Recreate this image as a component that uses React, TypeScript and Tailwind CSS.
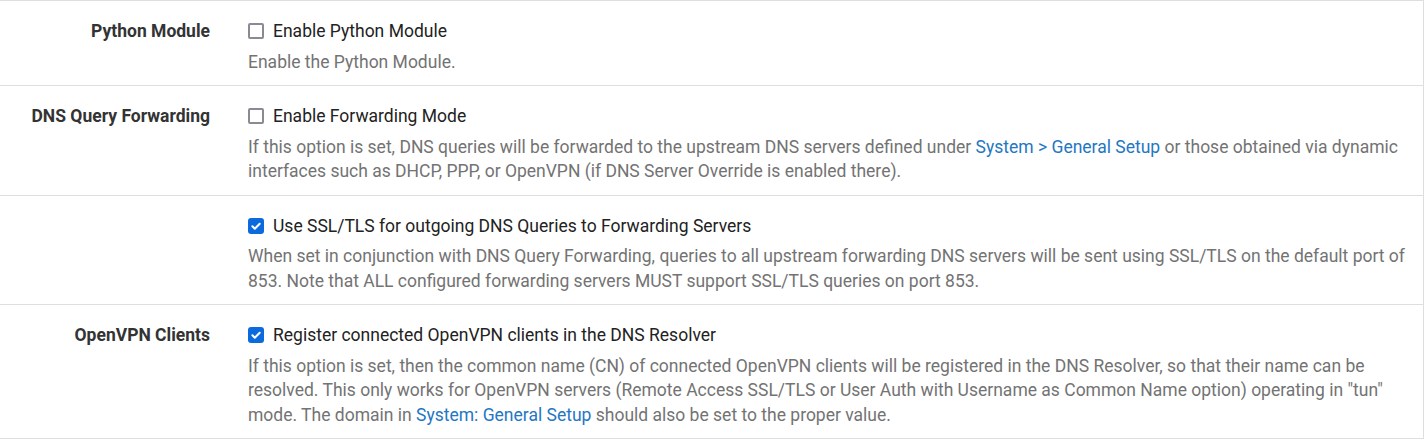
import type { FC, ReactNode } from 'react';

type CheckProps = {
  checked?: boolean;
};

const Check: FC<CheckProps> = ({ checked }) => {
  if (checked) {
    return (
      <span className="mr-[9px] inline-flex h-[16px] w-[16px] shrink-0 items-center justify-center rounded-[3px] bg-[#0b6bdd]">
        <svg viewBox="0 0 12 12" width="12" height="12" fill="none">
          <path d="M2.4 6.3l2.4 2.4 4.9-5" stroke="#fff" strokeWidth="2" strokeLinecap="round" strokeLinejoin="round" />
        </svg>
      </span>
    );
  }
  return <span className="mr-[9px] inline-block h-[16px] w-[16px] shrink-0 rounded-[2px] border-2 border-[#8a8a95] bg-white" />;
};

type RowProps = {
  label?: string;
  checkLabel: string;
  checked?: boolean;
  children: ReactNode;
};

const Row: FC<RowProps> = ({ label, checkLabel, checked, children }) => {
  return (
    <div className="flex border-b border-[#dedede] pt-[18px] pb-[11px]">
      <div className="w-[210px] shrink-0 text-right font-bold text-[#333]">{label}</div>
      <div className="ml-[38px] flex-1 pr-[12px]">
        <label className="flex items-center text-[#222]">
          <Check checked={checked} />
          {checkLabel}
        </label>
        <div className="mt-[6px] text-[#737373]">{children}</div>
      </div>
    </div>
  );
};

const Link: FC<{ children: ReactNode }> = ({ children }) => (
  <a className="text-[#2477c2]" href="#">
    {children}
  </a>
);

export default function App() {
  return (
    <div className="min-h-screen bg-white font-['Roboto',sans-serif] text-[17.5px] leading-[24.5px]">
      <div className="w-[1424px] border-t border-r border-[#dedede] bg-white">
        <Row label="Python Module" checkLabel="Enable Python Module">
          Enable the Python Module.
        </Row>
        <Row label="DNS Query Forwarding" checkLabel="Enable Forwarding Mode">
          If this option is set, DNS queries will be forwarded to the upstream DNS servers defined under{' '}
          <Link>System &gt; General Setup</Link> or those obtained via dynamic interfaces such as DHCP, PPP, or
          OpenVPN (if DNS Server Override is enabled there).
        </Row>
        <Row checkLabel="Use SSL/TLS for outgoing DNS Queries to Forwarding Servers" checked>
          When set in conjunction with DNS Query Forwarding, queries to all upstream forwarding DNS servers will be
          sent using SSL/TLS on the default port of 853. Note that ALL configured forwarding servers MUST support
          SSL/TLS queries on port 853.
        </Row>
        <Row label="OpenVPN Clients" checkLabel="Register connected OpenVPN clients in the DNS Resolver" checked>
          If this option is set, then the common name (CN) of connected OpenVPN clients will be registered in the DNS
          Resolver, so that their name can be resolved. This only works for OpenVPN servers (Remote Access SSL/TLS or
          User Auth with Username as Common Name option) operating in "tun" mode. The domain in{' '}
          <Link>System: General Setup</Link> should also be set to the proper value.
        </Row>
      </div>
    </div>
  );
}
